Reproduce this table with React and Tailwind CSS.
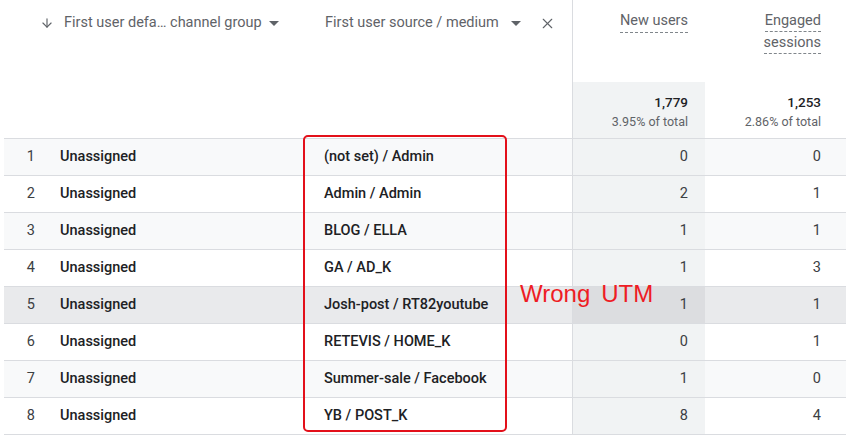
import { ArrowDown, X } from "lucide-react";

const ROWS = [
  { n: 1, ch: "Unassigned", src: "(not set) / Admin", nu: 0, es: 0 },
  { n: 2, ch: "Unassigned", src: "Admin / Admin", nu: 2, es: 1 },
  { n: 3, ch: "Unassigned", src: "BLOG / ELLA", nu: 1, es: 1 },
  { n: 4, ch: "Unassigned", src: "GA / AD_K", nu: 1, es: 3 },
  { n: 5, ch: "Unassigned", src: "Josh-post / RT82youtube", nu: 1, es: 1, hover: true },
  { n: 6, ch: "Unassigned", src: "RETEVIS / HOME_K", nu: 0, es: 1 },
  { n: 7, ch: "Unassigned", src: "Summer-sale / Facebook", nu: 1, es: 0 },
  { n: 8, ch: "Unassigned", src: "YB / POST_K", nu: 8, es: 4 },
];

const COLS = "grid grid-cols-[44px_260px_264px_133px_1fr]";

function Caret() {
  return (
    <svg width="10" height="5" viewBox="0 0 10 5" className="shrink-0">
      <path d="M0 0h10L5 5z" fill="#5f6368" />
    </svg>
  );
}

export default function App() {
  return (
    <div className="relative w-[846px] h-[438px] overflow-hidden bg-white pl-1 font-['Roboto',sans-serif] text-[14.5px]">
      {/* header */}
      <div className={`${COLS} h-[139px] border-b border-[#dadce0] text-[#5f6368]`}>
        <div className="col-span-2 flex items-start pl-[36px] pr-[29px] pt-[13px] leading-[20px]">
          <ArrowDown size={14} strokeWidth={2} className="mt-[3px] shrink-0 text-[#5f6368]" />
          <span className="ml-[10px]">First user defa… channel group</span>
          <span className="ml-auto mt-[8px]"><Caret /></span>
        </div>
        <div className="flex items-start pl-[17px] pt-[13px] leading-[20px]">
          <span>First user source / medium</span>
          <span className="ml-[12px] mt-[8px]"><Caret /></span>
          <X size={17} strokeWidth={1.6} className="ml-[18px] mt-[2px] text-[#5f6368]" />
        </div>
        <div className="flex flex-col border-l border-[#dadce0]">
          <div className="h-[82px] flex justify-end pr-[17px] pt-[11px]">
            <span className="h-fit leading-[20px] border-b border-dashed border-[#80868b] pb-[1px]">New users</span>
          </div>
          <div className="flex-1 bg-[#f1f3f4] pr-[17px] pt-[10px] text-right">
            <div className="leading-[20px] text-[#202124] font-medium text-[13.5px]">1,779</div>
            <div className="leading-[20px] text-[12.5px] text-[#5f6368]">3.95% of total</div>
          </div>
        </div>
        <div className="flex flex-col">
          <div className="h-[82px] flex flex-col items-end pr-[25px] pt-[10px] leading-[21px]">
            <span className="border-b border-dashed border-[#80868b]">Engaged</span>
            <span className="border-b border-dashed border-[#80868b]">sessions</span>
          </div>
          <div className="flex-1 pr-[25px] pt-[10px] text-right">
            <div className="leading-[20px] text-[#202124] font-medium text-[13.5px]">1,253</div>
            <div className="leading-[20px] text-[12.5px] text-[#5f6368]">2.86% of total</div>
          </div>
        </div>
      </div>

      {/* rows */}
      {ROWS.map((r) => (
        <div
          key={r.n}
          className={`${COLS} h-[37px] border-b border-[#dadce0] ${
            r.hover ? "bg-[#e9eaec]" : r.n % 2 ? "bg-[#f8f9fa]" : "bg-white"
          }`}
        >
          <div className="flex items-center justify-end pr-[13px] text-[#3c4043]">{r.n}</div>
          <div className="flex items-center pl-[12px] font-medium text-[#202124]">{r.ch}</div>
          <div className="flex items-center pl-[16px] font-medium text-[#202124]">{r.src}</div>
          <div
            className={`flex items-center justify-end pr-[17px] border-l border-[#dadce0] text-[#3c4043] ${
              r.hover ? "bg-[#dcdde0]" : "bg-[#f1f3f4]"
            }`}
          >
            {r.nu}
          </div>
          <div className="flex items-center justify-end pr-[25px] text-[#3c4043]">{r.es}</div>
        </div>
      ))}

      {/* annotation */}
      <div className="absolute left-[303px] top-[135px] w-[204px] h-[297px] rounded-[5px] border-[2.5px] border-[#e3101a]" />
      <div className="absolute left-[520px] top-[280px] flex gap-[11px] font-['Liberation_Sans',sans-serif] text-[24px] leading-[28px] text-[#ee1c24]">
        <span>Wrong</span>
        <span>UTM</span>
      </div>
    </div>
  );
}
